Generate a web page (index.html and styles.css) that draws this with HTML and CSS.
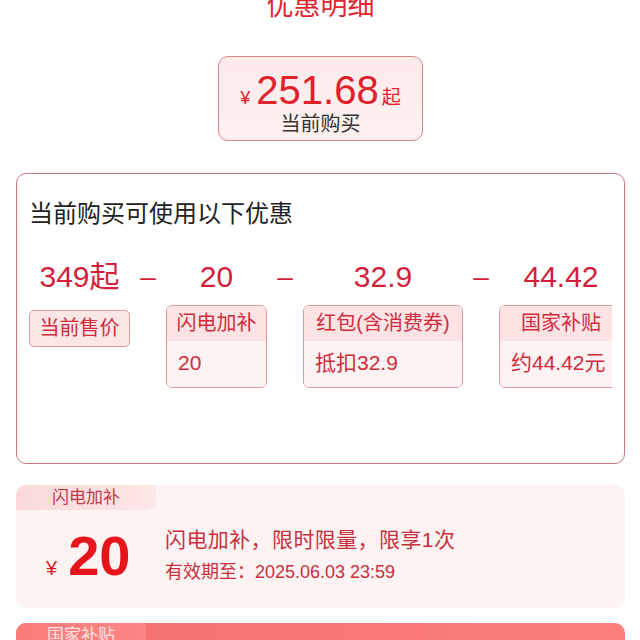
FILE: index.html
```html
<!DOCTYPE html>
<html lang="zh-CN">
<head>
    <meta charset="UTF-8">
    <meta name="viewport" content="width=device-width, initial-scale=1.0">
    <title>优惠明细</title>
    <link rel="stylesheet" href="styles.css">
</head>
<body>
    <div class="page">
        <h1 class="title">优惠明细</h1>

        <div class="price-box">
            <div class="price-line">
                <span class="price-yen">¥</span><span class="price-num">251.68</span><span class="price-qi">起</span>
            </div>
            <div class="price-label">当前购买</div>
        </div>

        <div class="deal-card">
            <div class="deal-title">当前购买可使用以下优惠</div>
            <div class="deal-row">
                <div class="deal-col col-1">
                    <div class="deal-num">349起</div>
                    <div class="deal-tag-simple">当前售价</div>
                </div>
                <div class="minus">–</div>
                <div class="deal-col col-2">
                    <div class="deal-num">20</div>
                    <div class="deal-tag">
                        <div class="deal-tag-head">闪电加补</div>
                        <div class="deal-tag-body">20</div>
                    </div>
                </div>
                <div class="minus">–</div>
                <div class="deal-col col-3">
                    <div class="deal-num">32.9</div>
                    <div class="deal-tag">
                        <div class="deal-tag-head">红包(含消费券)</div>
                        <div class="deal-tag-body">抵扣32.9</div>
                    </div>
                </div>
                <div class="minus">–</div>
                <div class="deal-col col-4">
                    <div class="deal-num">44.42</div>
                    <div class="deal-tag">
                        <div class="deal-tag-head">国家补贴</div>
                        <div class="deal-tag-body">约44.42元</div>
                    </div>
                </div>
            </div>
        </div>

        <div class="coupon">
            <div class="coupon-tab">闪电加补</div>
            <div class="coupon-body">
                <div class="coupon-price">
                    <span class="coupon-yen">¥</span><span class="coupon-num">20</span>
                </div>
                <div class="coupon-info">
                    <div class="coupon-desc">闪电加补，限时限量，限享1次</div>
                    <div class="coupon-date">有效期至：2025.06.03 23:59</div>
                </div>
            </div>
        </div>

        <div class="coupon coupon-red">
            <div class="coupon-tab">国家补贴</div>
        </div>
    </div>
</body>
</html>
```

FILE: styles.css
```css
body {
    margin: 0;
    padding: 0;
    background-color: #fff;
    font-family: "Liberation Sans", "Noto Sans CJK SC", sans-serif;
    overflow: hidden;
    height: 640px;
}
.page {
    padding: 0 15px 0 16px;
    display: flex;
    flex-direction: column;
}
.title {
    margin: -7px 0 0;
    font-size: 27px;
    line-height: 27px;
    font-weight: normal;
    color: #e0262f;
    text-align: center;
}

/* 顶部价格框 */
.price-box {
    align-self: flex-start;
    margin: 36px 0 0 202px;
    width: 203px;
    height: 83px;
    border: 1px solid #d9878b;
    border-radius: 10px;
    background: linear-gradient(180deg, #fdeaea, #fdf1f0);
    display: flex;
    flex-direction: column;
    align-items: center;
}
.price-line {
    margin-top: 11px;
    height: 44px;
    line-height: 44px;
    color: #e0202a;
}
.price-yen {
    font-size: 18px;
    margin-right: 6px;
}
.price-num {
    font-size: 40px;
}
.price-qi {
    font-size: 19px;
    margin-left: 3px;
}
.price-label {
    font-size: 20px;
    line-height: 24px;
    color: #333;
}

/* 可用优惠卡片 */
.deal-card {
    margin-top: 32px;
    height: 291px;
    border: 1px solid #c67a7f;
    border-radius: 10px;
    padding: 28px 12px 0 12px;
    box-sizing: border-box;
}
.deal-title {
    font-size: 24px;
    line-height: 24px;
    color: #222;
}
.deal-row {
    margin-top: 34px;
    display: flex;
    gap: 10px;
    overflow: hidden;
}
.deal-col {
    flex: 0 0 auto;
    display: flex;
    flex-direction: column;
    align-items: center;
}
.col-1, .col-2 { width: 101px; }
.col-3 { width: 160px; }
.col-4 { width: 124px; }
.deal-num {
    font-size: 30px;
    line-height: 34px;
    height: 34px;
    color: #d31e3c;
    margin-bottom: 11px;
}
.minus {
    flex: 0 0 16px;
    font-size: 28px;
    line-height: 34px;
    height: 34px;
    color: #d31e3c;
    text-align: center;
}
.deal-tag-simple {
    margin-top: 5px;
    width: 100%;
    box-sizing: border-box;
    height: 37px;
    line-height: 35px;
    border: 1px solid #e09ca0;
    border-radius: 5px;
    background-color: #fde6e6;
    color: #d02c3e;
    font-size: 20px;
    text-align: center;
}
.deal-tag {
    width: 100%;
    box-sizing: border-box;
    border: 1px solid #e09ca0;
    border-radius: 6px;
    overflow: hidden;
    color: #d02c3e;
    font-size: 20px;
}
.deal-tag-head {
    height: 35px;
    line-height: 35px;
    text-align: center;
    background-color: #fde3e4;
}
.deal-tag-body {
    height: 46px;
    line-height: 44px;
    padding-left: 11px;
    font-size: 21px;
    background-color: #fef3f2;
    white-space: nowrap;
}

/* 优惠券卡片 */
.coupon {
    margin-top: 21px;
    height: 123px;
    border-radius: 10px;
    background-color: #fdf3f2;
    overflow: hidden;
}
.coupon-tab {
    width: 140px;
    height: 25px;
    line-height: 25px;
    font-size: 17px;
    text-align: center;
    color: #c03a48;
    background: linear-gradient(90deg, #fbd9da, #fde7e7);
    border-bottom-right-radius: 10px;
}
.coupon-body {
    height: 98px;
    display: flex;
    align-items: flex-start;
    padding-left: 30px;
}
.coupon-price {
    display: flex;
    align-items: baseline;
    color: #e8141c;
    width: 119px;
    margin-top: 18px;
}
.coupon-yen {
    font-size: 20px;
    margin-right: 11px;
    color: #d8202a;
}
.coupon-num {
    font-size: 56px;
    line-height: 56px;
    font-weight: bold;
}
.coupon-info {
    color: #c8303f;
    margin-top: 16px;
}
.coupon-desc {
    font-size: 21px;
    line-height: 28px;
    letter-spacing: 0.4px;
}
.coupon-date {
    font-size: 18px;
    line-height: 28px;
    margin-top: 4px;
}
.coupon-red {
    margin-top: 15px;
    height: 60px;
    background: linear-gradient(90deg, #f56f6f, #fa7f7d);
}
.coupon-red .coupon-tab {
    width: 130px;
    color: #ffe3e3;
    background: linear-gradient(90deg, #f87c7a, #fb8583);
}
```
